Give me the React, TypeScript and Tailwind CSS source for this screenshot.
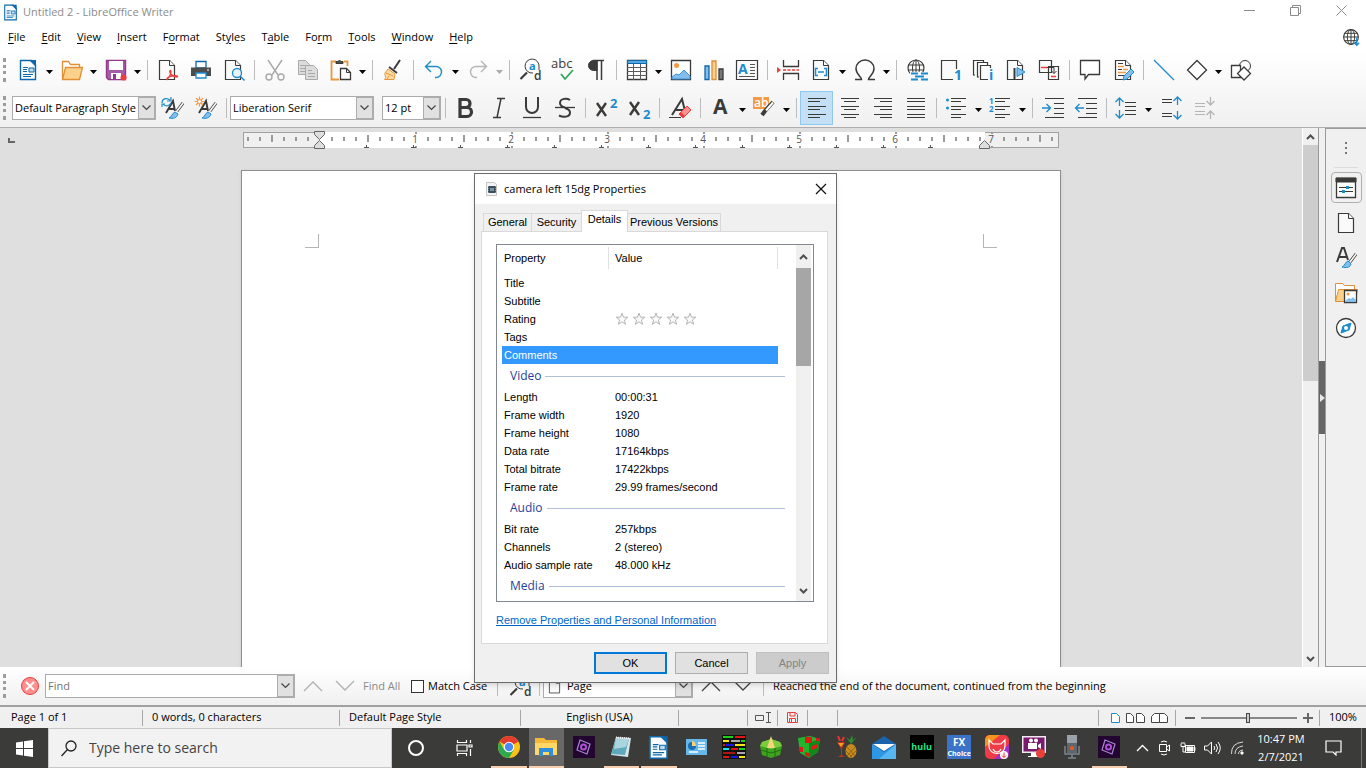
import { useState } from "react";
import type { ReactNode } from "react";
import { clsx } from "clsx";

const BLUE = "#1e8bcd";
const INK = "#3a3a38";
const RED = "#ed3d3b";

interface IconProps {
  children: ReactNode;
  size?: number;
  color?: string;
}

function Icon({ children, size = 22, color = INK }: IconProps) {
  return (
    <svg width={size} height={size} viewBox="0 0 22 22" fill="none" stroke={color} strokeWidth="1" className="shrink-0 overflow-visible" aria-hidden="true">
      {children}
    </svg>
  );
}

const WriterIcon = ({ size = 22 }: { size?: number }) => (
  <Icon size={size} color="#0d69ab">
    <path d="M3.5 1.5h11l4 4v15h-15z" fill="#fff" strokeWidth="1.4" />
    <path d="M12 1h7v7z" fill="#0d69ab" stroke="none" />
    <path d="M6 8.5h5M6 10.5h4M6 12.5h4M6 15.5h10M6 17.5h8" />
    <path d="M12 9h5v4h-5z" fill="#bcdcf3" />
  </Icon>
);

const Sheet = ({ x = 4, fill = "#fafafa", stroke = INK }: { x?: number; fill?: string; stroke?: string }) => (
  <g fill={fill} stroke={stroke}>
    <path d={`M${x - 0.5} 1.5h10l5 5v14h-15z`} strokeWidth="1.2" />
    <path d={`M${x + 9.5} 1.5v5h5`} />
  </g>
);

const icons: Record<string, ReactNode> = {
  new: <WriterIcon />,
  open: (
    <Icon color="#e18e35">
      <path d="M1.5 20V2.5h6l2 3h9v4" fill="#fff" strokeWidth="1.3" />
      <path d="M1.5 20.5l3-12h17l-3 12z" fill="#fcd28b" strokeWidth="1.3" />
    </Icon>
  ),
  save: (
    <Icon color="#93398d">
      <path d="M1.5 1.5h19v19h-17l-2-2z" fill="#a75aa5" strokeWidth="1.4" />
      <path d="M4 2h14v9H4z" fill="#fff" stroke="none" />
      <path d="M6 14h10v6H6z" fill="#fff" stroke="none" />
      <path d="M8 15h3v5H8z" fill="#93398d" stroke="none" />
      <circle cx="18.5" cy="18.5" r="3" fill={RED} stroke="none" />
    </Icon>
  ),
  pdf: (
    <Icon>
      <Sheet x={3} />
      <path d="M10 20.500c4-4 4.500-8 3.500-9-2 0 0 6 6.500 6.500 2-1-1-2-4-1-3.500 0-7 2.500-6 3.500z" stroke={RED} strokeWidth="1.300" fill="#fff" />
    </Icon>
  ),
  print: (
    <Icon>
      <path d="M6 2.500h10V9H6z" fill="#fff" stroke="#0d69ab" strokeWidth="1.300" />
      <path d="M1 8.500h20V17H1z" fill="#4d4d4d" stroke="none" />
      <path d="M6 14h10v5H6z" fill="#fff" stroke={BLUE} strokeWidth="1.300" />
      <path d="M17 11h2" stroke="#fff" />
    </Icon>
  ),
  preview: (
    <Icon>
      <Sheet x={3} />
      <circle cx="14" cy="14" r="4.500" stroke={BLUE} fill="#e8f3fb" strokeWidth="1.300" />
      <path d="M17.500 17.500l4 4" stroke={BLUE} strokeWidth="1.500" />
    </Icon>
  ),
  cut: (
    <Icon color="#a9a9a9">
      <path d="M4 1l10 15M18 1L8 16" strokeWidth="1.400" />
      <circle cx="5" cy="18" r="3" strokeWidth="1.400" />
      <circle cx="17" cy="18" r="3" strokeWidth="1.400" />
    </Icon>
  ),
  copy: (
    <Icon color="#a9a9a9">
      <path d="M1.500 1.500h7l4 4v10h-11z" fill="#dcdcdc" />
      <path d="M3 6.500h5M3 9.500h5M3 12.500h5" />
      <path d="M8.500 6.500h8l4 4v10h-12z" fill="#dcdcdc" />
      <path d="M11 11.500h4M11 14.500h7M11 17.500h7" />
    </Icon>
  ),
  paste: (
    <Icon>
      <path d="M9 20.500H1.500v-18H6M14 2.500h3.500V7" stroke="#e9973e" strokeWidth="1.800" />
      <path d="M6 4.500V2.500h2L9.500 1 11 2.500h2v2z" fill="#4d4d4d" />
      <path d="M10.500 9.500h6l4 4v7h-10z" fill="#fff" strokeWidth="1.300" />
      <path d="M16.500 9.500v4h4" />
    </Icon>
  ),
  brush: (
    <Icon>
      <path d="M18 1l-6 9" strokeWidth="2" />
      <path d="M7 8l8 6" strokeWidth="1.800" />
      <path d="M6 10l7 5-1 5.500H2.500C5 18 2 16 3 14z" fill="#fdd9a2" stroke="#e9973e" />
      <path d="M4 14l7 3M5 20l2-3" stroke="#e9973e" />
    </Icon>
  ),
  undo: (
    <Icon color={BLUE}>
      <path d="M8 2L2.500 7.500 8 13M3 7.500h10a5.500 5.500 0 0 1 0 11h-1" strokeWidth="1.400" />
    </Icon>
  ),
  redo: (
    <Icon color="#b5b5b5">
      <path d="M14 2l5.500 5.500L14 13M19 7.500H9a5.500 5.500 0 0 0 0 11h1" strokeWidth="1.400" />
    </Icon>
  ),
  find: (
    <Icon>
      <path d="M14 14A7 7 0 1 1 20 8v3" />
      <path d="M8 13.500l-6.500 6.500" strokeWidth="2.200" />
      <text x="10" y="11" fontSize="11" fontWeight="700" fontFamily="Open Sans, sans-serif" fill={BLUE} stroke="none">a</text>
      <text x="15" y="21" fontSize="12" fontWeight="600" fontFamily="Open Sans, sans-serif" fill={INK} stroke="none">d</text>
    </Icon>
  ),
  spell: (
    <Icon>
      <text x="-1" y="9" fontSize="13" fontFamily="Open Sans, sans-serif" fill={INK} stroke="none">abc</text>
      <path d="M9 15l4 5 8-9" stroke="#2aa757" strokeWidth="1.700" />
    </Icon>
  ),
  pilcrow: (
    <Icon>
      <path d="M8 1.500h11" strokeWidth="1.500" />
      <path d="M12 1.500H8.500a5 5 0 0 0 0 10H12z" fill={INK} />
      <path d="M12 1v20M16.500 1v20" strokeWidth="1.500" />
    </Icon>
  ),
  table: (
    <Icon>
      <path d="M1.500 1.500h19v19h-19z" fill="#fff" strokeWidth="1.300" />
      <path d="M1.500 1.500h19v3h-19z" fill="#5aa7e0" stroke="#0d69ab" />
      <path d="M1 8.500h20M1 12.500h20M1 16.500h20M7.500 5v16M14.500 5v16" stroke="#5c5c5c" />
    </Icon>
  ),
  image: (
    <Icon>
      <path d="M1.500 1.500h19v19h-19z" fill="#fff" strokeWidth="1.300" />
      <circle cx="6.500" cy="6.500" r="2.500" fill="#f29a45" stroke="none" />
      <path d="M2 18l4-3 3 1 5-5 6 6v3H2z" fill="#83beec" stroke="#3a93d6" />
    </Icon>
  ),
  chart: (
    <Icon>
      <path d="M2 7h4v13.500H2z" fill="#83beec" stroke="#0d69ab" strokeWidth="1.300" />
      <path d="M9 2h4v18.500H9z" fill="#fcd28b" stroke="#e18e35" strokeWidth="1.300" />
      <path d="M16 10h4v10.500h-4z" fill="#797979" strokeWidth="1.300" />
    </Icon>
  ),
  textbox: (
    <Icon>
      <path d="M.500 1.500h21v19H.500z" fill="#fafafa" strokeWidth="1.200" />
      <text x="2" y="15" fontSize="14" fontWeight="700" fontFamily="Open Sans, sans-serif" fill={BLUE} stroke="none">A</text>
      <path d="M14 5.500h5M14 8.500h5M14 11.500h5M14 14.500h5M3 17.500h16" stroke="#555" />
    </Icon>
  ),
  pagebreak: (
    <Icon>
      <path d="M6.500 1v6.500h15V1M6.500 21v-6.500h15V21" strokeWidth="1.300" />
      <path d="M6 11h16" stroke={RED} strokeDasharray="3 1.500" strokeWidth="1.300" />
      <path d="M0 8l4 3-4 3z" fill={RED} stroke="none" />
    </Icon>
  ),
  field: (
    <Icon>
      <Sheet x={4} />
      <path d="M8 9.500H5.500v7H8M14 9.500h2.500v7H14M8 13h6" stroke={BLUE} strokeWidth="1.500" />
    </Icon>
  ),
  omega: (
    <Icon>
      <path d="M1 20.500h6.500c0-3-5.500-5-5.500-11a9 8.500 0 0 1 18 0c0 6-5.500 8-5.500 11H21" strokeWidth="1.500" />
    </Icon>
  ),
  link: (
    <Icon>
      <circle cx="10" cy="9" r="8" strokeWidth="1.200" />
      <ellipse cx="10" cy="9" rx="3.500" ry="8" />
      <path d="M2 6h16M2 11h16M10 1v16" />
      <path d="M4 13h18v9H4z" fill="#f8f8f8" stroke="none" />
      <path d="M12 14.500H5M12 20.500H5M15 14.500h7M15 20.500h7M9 17.500h9" stroke={BLUE} strokeWidth="2" />
    </Icon>
  ),
  footnote: (
    <Icon>
      <path d="M14 20.500H2.500v-19h15V10" fill="#fafafa" strokeWidth="1.200" />
      <text x="15" y="21" fontSize="14" fontWeight="700" fontFamily="Open Sans, sans-serif" fill={BLUE} stroke="none">1</text>
    </Icon>
  ),
  endnote: (
    <Icon>
      <path d="M3 16H1.500V1.500h10V4M7 18H5.500V3.500h10V6" strokeWidth="1.200" />
      <path d="M16 20.500H8.500V6.500h10V9" fill="#fafafa" strokeWidth="1.200" />
      <text x="17" y="21" fontSize="14" fontWeight="700" fontFamily="Open Sans, sans-serif" fill={BLUE} stroke="none">i</text>
    </Icon>
  ),
  bookmark: (
    <Icon>
      <Sheet x={3} />
      <path d="M9.500 9v12" strokeWidth="2" />
      <path d="M12 8.500l8 4.500-8 4.500z" fill="#83beec" stroke={BLUE} />
    </Icon>
  ),
  crossref: (
    <Icon>
      <path d="M1.500 1.500h12v12h-12zM10.500 7.500h10v13h-10z" fill="#fafafa" strokeWidth="1.200" />
      <path d="M3 8.500h6M13 17.500h5" stroke={RED} strokeWidth="1.500" />
      <path d="M9 8.500h7v6M13.500 12l2.500 2.500 2.500-2.500" />
    </Icon>
  ),
  comment: (
    <Icon>
      <path d="M1.500 1.500h19v14h-11L6 20v-4.500H1.500z" fill="#fff" strokeWidth="1.300" />
    </Icon>
  ),
  track: (
    <Icon>
      <Sheet x={4} />
      <path d="M6 4.500h5M6 10.500h4M6 16.500h6" />
      <path d="M6 7.500h6M11 10.500h5M6 13.500h8" stroke="#f29a45" strokeWidth="1.300" />
      <path d="M19 10l3 3-7 7-4 1 1-4z" fill="#83beec" stroke={BLUE} />
    </Icon>
  ),
  line: (
    <Icon color={BLUE}>
      <path d="M1 1l20 20" strokeWidth="1.300" />
    </Icon>
  ),
  diamond: (
    <Icon>
      <path d="M11 1.500l9.500 9.500-9.500 9.500L1.500 11z" fill="#fff" strokeWidth="1.300" />
    </Icon>
  ),
  shapes: (
    <Icon>
      <circle cx="15" cy="7" r="5.500" fill="#fff" />
      <path d="M1.500 6.500h9v12h-9z" fill="#fff" strokeWidth="1.300" />
      <path d="M14 8l6.500 6.500L14 21l-6.500-6.500z" fill="#fff" strokeWidth="1.300" />
    </Icon>
  ),
  updateStyle: (
    <Icon>
      <path d="M4 16l7-12 2 10M7 12h6" strokeWidth="1.900" />
      <path d="M0 6c0-4 4-6 8-3M9 0v4H5M9 6c-1 3-6 4-8 1M0 10V7h3" stroke={BLUE} strokeWidth="1.200" />
      <path d="M21 6l-6 8" strokeWidth="3" />
      <path d="M21 6l-6 8" stroke="#fff" strokeWidth="1.500" />
      <path d="M13 15l3 2c-1 4-5 5-9 4 3-1 3-5 6-6z" fill="#83beec" stroke={BLUE} />
    </Icon>
  ),
  newStyle: (
    <Icon>
      <path d="M4 16l7-12 2 10M7 12h6" strokeWidth="1.900" />
      <path d="M4.500-.500v10M-.500 4.500h10M1 1l7 7M8 1L1 8" stroke="#f29a45" strokeWidth="1.200" />
      <circle cx="4.500" cy="4.500" r="2" fill="#fff" stroke="#f29a45" />
      <path d="M21 6l-6 8" strokeWidth="3" />
      <path d="M21 6l-6 8" stroke="#fff" strokeWidth="1.500" />
      <path d="M13 15l3 2c-1 4-5 5-9 4 3-1 3-5 6-6z" fill="#83beec" stroke={BLUE} />
    </Icon>
  ),
  bold: (
    <Icon>
      <path d="M5 2.500h6a4 4 0 0 1 0 8H5zM5 10.500h7a4.500 4.500 0 0 1 0 9H5z" strokeWidth="3.200" />
    </Icon>
  ),
  italic: (
    <Icon>
      <path d="M9 1.500h8M5 20.500h8M13 1.500L9 20.500" strokeWidth="1.500" />
    </Icon>
  ),
  underline: (
    <Icon>
      <path d="M5 0v10a6 6 0 0 0 12 0V0" strokeWidth="2" />
      <path d="M2 20.500h18" strokeWidth="1.300" />
    </Icon>
  ),
  strike: (
    <Icon>
      <path d="M16 3c-3-2-10-2-10 3 0 3 3 4 5 4.500M11 11c3 1 5 2 5 4.500 0 5-7 5-11 3" strokeWidth="2" />
      <path d="M1 10.500h20" strokeWidth="1.300" />
    </Icon>
  ),
  sup: (
    <Icon>
      <path d="M2 6l9 13M11 6L2 19" strokeWidth="2.400" />
      <text x="15" y="11" fontSize="13" fontWeight="700" fontFamily="Open Sans, sans-serif" fill={BLUE} stroke="none">2</text>
    </Icon>
  ),
  sub: (
    <Icon>
      <path d="M2 5l9 13M11 5L2 18" strokeWidth="2.400" />
      <text x="15" y="22" fontSize="13" fontWeight="700" fontFamily="Open Sans, sans-serif" fill={BLUE} stroke="none">2</text>
    </Icon>
  ),
  clear: (
    <Icon>
      <path d="M3 18L13 2l3 12M7 13h9" strokeWidth="2" />
      <path d="M0 20.500h12" />
      <path d="M18 9l4 4-8 8-4-4z" fill="#ff8f8f" stroke={RED} />
      <path d="M12 15l4 4-2 2-4-4z" fill={RED} stroke="none" />
    </Icon>
  ),
  fontColor: (
    <Icon>
      <text x="3" y="17" fontSize="21" fontWeight="700" fontFamily="Open Sans, sans-serif" fill={INK} stroke="none">A</text>
    </Icon>
  ),
  highlight: (
    <Icon>
      <path d="M-1 0h16v12H-1z" fill="#f29a45" stroke="none" />
      <text x="0" y="10" fontSize="12" fontWeight="600" fontFamily="Open Sans, sans-serif" fill="#fff" stroke="none">ab</text>
      <path d="M19 5l-8 9-3 4" strokeWidth="4" />
      <path d="M19 5.500l-7 8" stroke="#fff" strokeWidth="2" />
    </Icon>
  ),
  left: (
    <Icon>
      <path d="M2 1.500h18M2 4.500h12M2 9.500h18M2 12.500h12M2 17.500h18M2 20.500h12" strokeWidth="1.200" />
    </Icon>
  ),
  center: (
    <Icon>
      <path d="M2 1.500h18M5 4.500h12M2 9.500h18M5 12.500h12M2 17.500h18M5 20.500h12" strokeWidth="1.200" />
    </Icon>
  ),
  right: (
    <Icon>
      <path d="M2 1.500h18M8 4.500h12M2 9.500h18M8 12.500h12M2 17.500h18M8 20.500h12" strokeWidth="1.200" />
    </Icon>
  ),
  justify: (
    <Icon>
      <path d="M2 1.500h18M2 4.500h18M2 9.500h18M2 12.500h18M2 17.500h18M2 20.500h18" strokeWidth="1.200" />
    </Icon>
  ),
  bullets: (
    <Icon>
      <path d="M5 1.500h15M5 4.500h10M5 9.500h15M5 12.500h10M5 17.500h15M5 20.500h10" strokeWidth="1.200" />
      <circle cx="1.500" cy="3" r="1.500" fill={BLUE} stroke="none" />
      <circle cx="1.500" cy="11" r="1.500" fill={BLUE} stroke="none" />
    </Icon>
  ),
  numbers: (
    <Icon>
      <path d="M5 1.500h15M5 4.500h10M5 9.500h15M5 12.500h10M5 17.500h15M5 20.500h10" strokeWidth="1.200" />
      <g fontSize="8" fontWeight="700" fontFamily="Open Sans, sans-serif" fill={BLUE} stroke="none">
        <text x="-1" y="7">1</text>
        <text x="-1" y="15">2</text>
      </g>
    </Icon>
  ),
  indent: (
    <Icon>
      <path d="M3 1.500h19M12 6.500h10M12 11.500h10M12 16.500h10M3 20.500h19" strokeWidth="1.200" />
      <path d="M0 11h8M4.500 7l4 4-4 4" stroke={BLUE} strokeWidth="1.300" />
    </Icon>
  ),
  outdent: (
    <Icon>
      <path d="M3 1.500h19M11 6.500h11M11 11.500h11M11 16.500h11M3 20.500h19" strokeWidth="1.200" />
      <path d="M9 11H1M4.500 7l-4 4 4 4" stroke={BLUE} strokeWidth="1.300" />
    </Icon>
  ),
  lineSpacing: (
    <Icon>
      <path d="M9 5.500h11M9 9.500h11M9 13.500h11M9 17.500h11" strokeWidth="1.200" />
      <path d="M3.500 1v8M-.500 5l4-4 4 4M3.500 13v8M-.500 17l4 4 4-4" stroke={BLUE} strokeWidth="1.300" />
    </Icon>
  ),
  spaceUp: (
    <Icon>
      <path d="M2 2.500h10M2 5.500h10M2 16.500h10M2 19.500h10" strokeWidth="1.200" />
      <path d="M17.500 0v8M13.500 4l4-4 4 4M17.500 14v8M13.500 18l4 4 4-4" stroke={BLUE} strokeWidth="1.300" />
    </Icon>
  ),
  spaceDown: (
    <Icon color="#b5b5b5">
      <path d="M2 6.500h10M2 9.500h10M2 14.500h10M2 17.500h10" strokeWidth="1.200" />
      <path d="M17.500 0v8M13.500 4l4 4 4-4M17.500 14v8M13.500 18l4-4 4 4" strokeWidth="1.300" />
    </Icon>
  ),
};

// "|" is a separator, "v" and "x" are drop-down arrows (normal and greyed out)
const standardBar = [
  "new", "v", "open", "v", "save", "v", "|", "pdf", "print", "preview", "|", "cut", "copy", "paste", "v", "|",
  "brush", "|", "undo", "v", "redo", "x", "|", "find", "spell", "pilcrow", "|", "table", "v", "image", "chart",
  "textbox", "|", "pagebreak", "field", "v", "omega", "v", "|", "link", "footnote", "endnote", "bookmark",
  "crossref", "|", "comment", "track", "|", "line", "diamond", "v", "shapes",
];

const formatBar = [
  "|", "bold", "italic", "underline", "strike", "|", "sup", "sub", "|", "clear", "|", "fontColor", "v", "highlight",
  "v", "|", "left", "center", "right", "justify", "|", "bullets", "v", "numbers", "v", "|", "indent", "outdent", "|",
  "lineSpacing", "v", "spaceUp", "spaceDown",
];

const Separator = () => (
  <div className="flex w-2 shrink-0 justify-center">
    <div className="h-5 w-px bg-[#bdbdbd]" />
  </div>
);

const Grip = () => <div className="h-6 w-[3px] shrink-0 border-l-[3px] border-dotted border-[#9c9c9c]" />;

function ToolItems({ items }: { items: string[] }) {
  return (
    <>
      {items.map((item, i) => {
        if (item === "|") return <Separator key={i} />;
        if (item === "v" || item === "x") {
          return (
            <button key={i} aria-label="More options" className="flex h-8 w-[11px] shrink-0 items-center justify-center pt-1">
              <svg width="7" height="4" viewBox="0 0 7 4" className={item === "v" ? "fill-black" : "fill-[#aaa]"}>
                <path d="M0 0h7L3.500 4z" />
              </svg>
            </button>
          );
        }
        return (
          <button
            key={i}
            aria-label={item}
            className={clsx(
              "flex h-[34px] w-[33px] shrink-0 items-center justify-center",
              item === "left" && "border border-[#90c8f0] bg-[#c5e0f5]"
            )}
          >
            {icons[item]}
          </button>
        );
      })}
    </>
  );
}

const ChevronDown = () => (
  <svg width="9" height="6" viewBox="0 0 9 6" fill="none" stroke="#444" strokeWidth="1.200">
    <path d="M.500.500l4 4 4-4" />
  </svg>
);

function Combo({ label, value, className, icon }: { label: string; value: string; className: string; icon?: ReactNode }) {
  return (
    <div className={clsx("relative flex h-6 shrink-0 items-center border border-[#acacac] bg-white", className)}>
      {icon}
      <select aria-label={label} className="h-full min-w-0 flex-1 appearance-none overflow-hidden bg-transparent pl-0.5 outline-none">
        <option>{value}</option>
      </select>
      <span className="pointer-events-none flex h-full w-[17px] shrink-0 items-center justify-center border border-[#acacac] bg-[#e1e1e1]">
        <ChevronDown />
      </span>
    </div>
  );
}

const menus: [string, string, string][] = [
  ["", "F", "ile"], ["", "E", "dit"], ["", "V", "iew"], ["", "I", "nsert"], ["F", "o", "rmat"], ["St", "y", "les"],
  ["T", "a", "ble"], ["Fo", "r", "m"], ["", "T", "ools"], ["", "W", "indow"], ["", "H", "elp"],
];

function TitleBar() {
  return (
    <header className="flex h-6 items-center bg-white pl-0.5">
      <WriterIcon size={17} />
      <h1 className="flex-1 pl-1 text-[#8c8c8c]">Untitled 2 - LibreOffice Writer</h1>
      <div className="flex pr-0.5 pb-1">
        <button aria-label="Minimize" className="flex w-[46px] items-center justify-center">
          <svg width="11" height="11" fill="none" stroke="#8c8c8c"><path d="M0 5.500h11" /></svg>
        </button>
        <button aria-label="Restore" className="flex w-[46px] items-center justify-center">
          <svg width="11" height="11" fill="none" stroke="#8c8c8c"><path d="M.500 2.500h8v8h-8zM2.500 2.500v-2h8v8h-2" /></svg>
        </button>
        <button aria-label="Close" className="flex w-[46px] items-center justify-center">
          <svg width="11" height="11" fill="none" stroke="#8c8c8c"><path d="M.500.500l10 10M10.500.500l-10 10" /></svg>
        </button>
      </div>
    </header>
  );
}

function MenuBar() {
  return (
    <nav className="flex h-[26px] items-center bg-white pl-2">
      {menus.map(([pre, key, post]) => (
        <button key={pre + key + post} className="pr-4">
          {pre}<span className="underline underline-offset-2">{key}</span>{post}
        </button>
      ))}
      <button aria-label="Check for updates" className="mr-1.5 ml-auto">
        <Icon size={18}>
          <circle cx="11" cy="11" r="9" strokeWidth="1.400" />
          <ellipse cx="11" cy="11" rx="4.500" ry="9" strokeWidth="1.200" />
          <path d="M11 2v18M2 11h18M3 6.500h16M3 15.500h16" strokeWidth="1.200" />
          <path d="M18 12v9M15 18l3 3 3-3" stroke={BLUE} strokeWidth="1.700" />
        </Icon>
      </button>
    </nav>
  );
}

function Ruler() {
  const ticks = [];
  for (let i = -6; i <= 61; i++) {
    if (i % 8 !== 0 || i < 0) ticks.push(i);
  }
  return (
    <svg width="818" height="20" className="mx-auto shrink-0">
      <rect x="1.500" y="2.500" width="815" height="15" fill="#f0f0f0" stroke="#a0a0a0" />
      <rect x="78" y="2" width="665" height="16" fill="#fff" />
      {ticks.map((i) => (
        <rect
          key={i}
          x={77 + i * 12}
          y={i % 4 === 0 ? 5 : 7}
          width="2"
          height={i % 4 === 0 ? 7 : 4}
          fill="#9a9a9a"
        />
      ))}
      {[1, 2, 3, 4, 5, 6, 7].map((n) => (
        <g key={n}>
          <rect x={77 + n * 96} y="2" width="2" height="2" fill="#9a9a9a" />
          <rect x={77 + n * 96} y="16" width="2" height="2" fill="#9a9a9a" />
          <text x={77 + n * 96} y="13" fontSize="10" textAnchor="middle" fill="#555">{n}</text>
        </g>
      ))}
      {Array.from({ length: 13 }, (_, i) => (
        <path key={i} d={`M${122 + i * 47} 17.500h5M${124.5 + i * 47} 15v2`} stroke="#555" />
      ))}
      <path d="M72.500 1.500h10v3l-5 5-5-5zM72.500 18.500h10v-3l-5-5-5 5zM737.500 18.500h10v-3l-5-5-5 5z" fill="#dedede" stroke="#666" />
    </svg>
  );
}

function DocumentArea() {
  return (
    <main className="flex min-w-0 flex-1 flex-col overflow-hidden bg-[#dfdfdf]">
      <div className="flex h-[42px] items-start pt-0.5">
        <span className="mt-2 ml-2 h-[5px] w-[7px] shrink-0 border-b-2 border-l-2 border-[#666]" />
        <div className="-ml-[15px] flex flex-1">
          <Ruler />
        </div>
      </div>
      <article className="mx-auto flex w-[820px] flex-1 items-start justify-between border border-b-0 border-[#8f8f8f] bg-white px-[63px] pt-[63px] shadow-sm">
        <span className="size-[14px] border-r border-b border-[#b5b5b5]" />
        <span className="size-[14px] border-b border-l border-[#b5b5b5]" />
      </article>
    </main>
  );
}

const Arrow = ({ up }: { up?: boolean }) => (
  <svg width="9" height="6" viewBox="0 0 9 6" fill="none" stroke="#505050" strokeWidth="2">
    <path d={up ? "M1 5l3.500-3.500L8 5" : "M1 1l3.500 3.500L8 1"} />
  </svg>
);

function Sidebar() {
  return (
    <aside className="flex shrink-0 bg-[#f0f0f0]">
      <div className="flex w-4 flex-col items-center border-l border-white">
        <span className="flex h-[17px] items-center"><Arrow up /></span>
        <span className="h-[236px] w-full bg-[#cdcdcd]" />
        <span className="mt-auto flex h-[17px] items-center"><Arrow /></span>
      </div>
      <div className="w-2 border-x border-[#9a9a9a] bg-[#f0f0f0] pt-[233px]">
        <button aria-label="Hide sidebar" className="flex h-[73px] w-full items-center justify-center bg-[#666]">
          <svg width="5" height="8" className="fill-[#e8e8e8]"><path d="M0 0l5 4-5 4z" /></svg>
        </button>
      </div>
      <div className="flex w-10 flex-col items-center gap-1 border-t border-b border-[#9a9a9a]">
        <button aria-label="Sidebar settings" className="flex h-[39px] w-6 flex-col items-center justify-center gap-[3px] border-b border-[#dcdcdc]">
          <i className="size-0.5 bg-[#777]" /><i className="size-0.5 bg-[#777]" /><i className="size-0.5 bg-[#777]" />
        </button>
        <button aria-label="Properties" className="flex size-[31px] items-center justify-center rounded-sm border border-[#b0b0b0]">
          <Icon>
            <path d="M1.500 1.500h19v19h-19z" fill="#fff" strokeWidth="1.300" />
            <path d="M1 1h20v4H1z" fill={INK} />
            <path d="M4 10.500h14M4 14.500h14" />
            <path d="M11 9h3v3h-3zM7 13h3v3H7z" fill={BLUE} stroke="none" />
          </Icon>
        </button>
        <button aria-label="Page" className="flex size-[31px] items-center justify-center"><Icon><Sheet x={4} /></Icon></button>
        <button aria-label="Styles" className="flex size-[31px] items-center justify-center">
          <Icon>
            <path d="M2 15L7 1h2l4 12M4 10h8" strokeWidth="2" />
            <path d="M21 7l-6 8" strokeWidth="3" />
            <path d="M21 7l-6 8" stroke="#fff" strokeWidth="1.500" />
            <path d="M13 14l3 3c-1 4-5 4-9 3 3-1 3-5 6-6z" fill="#83beec" stroke={BLUE} />
          </Icon>
        </button>
        <button aria-label="Gallery" className="flex size-[31px] items-center justify-center">
          <Icon>
            <path d="M.500 19V1.500h7l2 2h10V8" stroke="#e18e35" fill="#fff" />
            <path d="M.500 19.500l3-12h19l-2 12z" stroke="#e18e35" fill="#fcd28b" />
            <path d="M9.500 8.500h12v12h-12z" fill="#fff" strokeWidth="1.300" />
            <circle cx="13" cy="12" r="1.500" fill="#f29a45" stroke="none" />
            <path d="M10 19l4-3 2 1 2-2 3 3v2H10z" fill="#83beec" stroke="none" />
          </Icon>
        </button>
        <button aria-label="Navigator" className="flex size-[31px] items-center justify-center">
          <Icon>
            <circle cx="11" cy="11" r="9.500" fill="#fff" strokeWidth="1.300" />
            <path d="M16 6l-2 7-8 3 2-7z" fill={BLUE} stroke={BLUE} />
            <circle cx="11" cy="11" r="2" fill="#fff" stroke="none" />
          </Icon>
        </button>
      </div>
    </aside>
  );
}

const Chevron = ({ up, faint }: { up?: boolean; faint?: boolean }) => (
  <svg width="20" height="12" fill="none" stroke={faint ? "#b0b0b0" : "#444"} strokeWidth="1.300">
    <path d={up ? "M1 11l9-9 9 9" : "M1 1l9 9 9-9"} />
  </svg>
);

function FindBar() {
  return (
    <section className="flex h-10 shrink-0 items-center border-b-2 border-[#a0a0a0] bg-linear-to-b from-white to-[#f0f0f0] pl-[3px]">
      <Grip />
      <button aria-label="Close find bar" className="ml-2 flex w-[31px] justify-center">
        <svg width="20" height="20" viewBox="0 0 20 20">
          <circle cx="10" cy="10" r="8.500" fill="#ff8f8f" stroke={RED} />
          <path d="M6 6l8 8M14 6l-8 8" stroke="#fff" strokeWidth="2" />
        </svg>
      </button>
      <div className="flex h-6 w-[250px] shrink-0 border border-[#acacac] bg-white">
        <input aria-label="Find" placeholder="Find" className="min-w-0 flex-1 pl-0.5 outline-none placeholder:text-[#757575]" />
        <button aria-label="Search history" className="flex w-[17px] items-center justify-center border border-[#acacac] bg-[#e1e1e1]">
          <ChevronDown />
        </button>
      </div>
      <button aria-label="Find previous" className="ml-2"><Chevron up faint /></button>
      <button aria-label="Find next" className="ml-3"><Chevron faint /></button>
      <button className="ml-2 w-12 text-left whitespace-nowrap text-[#8a8a8a]">Find All</button>
      <label className="flex w-[82px] items-center gap-1 whitespace-nowrap">
        <input type="checkbox" className="size-[13px] shrink-0 appearance-none border border-[#333] bg-white" />
        Match Case
      </label>
      <Separator />
      <button aria-label="Find and replace" className="mr-1 ml-2">{icons.find}</button>
      <Separator />
      <Combo
        label="Navigate by"
        value="Page"
        className="w-[150px]"
        icon={<span className="px-[3px]"><Icon size={15}><Sheet x={4} /></Icon></span>}
      />
      <button aria-label="Previous page" className="ml-2"><Chevron up /></button>
      <button aria-label="Next page" className="mr-1.5 ml-3"><Chevron /></button>
      <Separator />
      <p className="pl-1.5">Reached the end of the document, continued from the beginning</p>
    </section>
  );
}

function StatusBar() {
  const cell = "flex h-4 items-center border-r border-[#a8a8a8]";
  return (
    <footer className="flex h-[21px] shrink-0 items-center bg-[#f0f0f0]">
      <span className={clsx(cell, "w-[143px] pl-[11px]")}>Page 1 of 1</span>
      <span className={clsx(cell, "w-[197px] pl-[9px]")}>0 words, 0 characters</span>
      <span className={clsx(cell, "w-[181px] pl-[9px]")}>Default Page Style</span>
      <span className={clsx(cell, "w-[158px] justify-center")}>English (USA)</span>
      <span className={clsx(cell, "w-[69px]")} />
      <span className={clsx(cell, "w-[30px] justify-center")}>
        <svg width="16" height="11" fill="none" stroke="#555"><path d="M.500 3.500h8v5h-8zM11 .500h5M11 10.500h5M13.500.500v10" /></svg>
      </span>
      <span className={clsx(cell, "w-[30px] justify-center")}>
        <svg width="11" height="11" fill="none" stroke={RED}><path d="M.500.500h8l2 2v8H.500zM3 .500v3.500h5V.500M2.500 10.500v-4h6v4M4.500 7v3" /></svg>
      </span>
      <span className={clsx(cell, "w-[30px]")} />
      <span className={clsx(cell, "flex-1")} />
      <span className={clsx(cell, "w-[77px] justify-center gap-1.5 pl-1")}>
        <svg width="9" height="10" fill="#fff" stroke={BLUE}><path d="M.500.500h5l3 3v6h-8z" /></svg>
        <svg width="19" height="10" fill="#fff" stroke="#444"><path d="M.500.500h4l3 3v6h-7zM10.500.500h5l3 3v6h-8z" /></svg>
        <svg width="17" height="10" fill="#fff" stroke="#444"><path d="M8.500.500h-5l-3 3v6h8zM8.500.500h5l3 3v6h-8z" /></svg>
      </span>
      <div className={clsx(cell, "w-36 justify-between pr-1.5 pl-[9px]")}>
        <button aria-label="Zoom out" className="h-0.5 w-2.5 bg-[#666]" />
        <input
          type="range"
          aria-label="Zoom"
          min={0}
          max={100}
          defaultValue={49}
          className="h-0.5 w-24 appearance-none bg-[#888] [&::-webkit-slider-thumb]:h-2.5 [&::-webkit-slider-thumb]:w-1 [&::-webkit-slider-thumb]:appearance-none [&::-webkit-slider-thumb]:border [&::-webkit-slider-thumb]:border-[#444] [&::-webkit-slider-thumb]:bg-[#ccc]"
        />
        <button aria-label="Zoom in">
          <svg width="10" height="10" stroke="#666" strokeWidth="2"><path d="M0 5h10M5 0v10" /></svg>
        </button>
      </div>
      <span className="w-[46px] pl-[9px]">100%</span>
    </footer>
  );
}

interface PropertyRow {
  name: string;
  value?: string;
  group?: boolean;
}

const properties: PropertyRow[] = [
  { name: "Title" },
  { name: "Subtitle" },
  { name: "Rating" },
  { name: "Tags" },
  { name: "Comments" },
  { name: "Video", group: true },
  { name: "Length", value: "00:00:31" },
  { name: "Frame width", value: "1920" },
  { name: "Frame height", value: "1080" },
  { name: "Data rate", value: "17164kbps" },
  { name: "Total bitrate", value: "17422kbps" },
  { name: "Frame rate", value: "29.99 frames/second" },
  { name: "Audio", group: true },
  { name: "Bit rate", value: "257kbps" },
  { name: "Channels", value: "2 (stereo)" },
  { name: "Audio sample rate", value: "48.000 kHz" },
  { name: "Media", group: true },
];

function Stars() {
  return (
    <div className="flex gap-[3px]">
      {[1, 2, 3, 4, 5].map((n) => (
        <svg key={n} width="14" height="14" viewBox="0 0 14 14" fill="#fafafa" stroke="#b4b4b4">
          <path d="M7 1.200l1.500 4h4.300L9.400 8l1.200 4.300L7 9.800l-3.600 2.500L4.600 8 1.200 5.200h4.300z" />
        </svg>
      ))}
    </div>
  );
}

function PropertiesDialog() {
  const [selected, setSelected] = useState("Comments");
  const tab = "border border-[#d9d9d9] h-[19px] bg-[#f0f0f0] text-center whitespace-nowrap";
  const button = "h-[22px] w-[73px] border";

  return (
    <div
      role="dialog"
      aria-label="camera left 15dg Properties"
      className="absolute top-[173px] left-[474px] flex w-[363px] flex-col border border-[#6b6b6b] bg-[#f0f0f0] font-['Liberation_Sans',sans-serif] text-[11px] shadow-md"
    >
      <div className="flex h-[30px] items-center bg-white pr-[9px] pl-[11px] font-['Open_Sans',sans-serif]">
        <svg width="11" height="14" viewBox="0 0 11 14">
          <path d="M.500.500h8l2 2v11H.500z" fill="#f4f4f4" stroke="#c4c4c4" />
          <path d="M2 4h8v7H2z" fill="#3d4b5c" />
          <path d="M4 6h4v3H4z" fill="#6f9a9c" />
          <path d="M2.500 4v7M9.500 4v7" stroke="#7d8a9b" strokeDasharray="1 1" />
        </svg>
        <h2 className="flex-1 pl-[7px]">camera left 15dg Properties</h2>
        <button aria-label="Close">
          <svg width="12" height="12" fill="none" stroke="#111" strokeWidth="1.200"><path d="M1 1l10 10M11 1L1 11" /></svg>
        </button>
      </div>

      <div role="tablist" className="mt-1.5 -mb-px flex items-end pl-2">
        <button role="tab" className={clsx(tab, "w-[49px]")}>General</button>
        <button role="tab" className={clsx(tab, "w-[49px] border-x-0")}>Security</button>
        <button role="tab" aria-selected className="relative h-[22px] w-[47px] border border-b-0 border-[#d9d9d9] bg-white pb-1 text-center">Details</button>
        <button role="tab" className={clsx(tab, "w-[93px] border-l-0")}>Previous Versions</button>
      </div>

      <div className="mr-2 ml-1.5 flex flex-col items-start border border-[#d9d9d9] bg-white px-[14px] pt-3 pb-[15px]">
        <div className="flex h-[358px] w-[318px] overflow-hidden border border-[#828790]">
          <div className="min-w-0 flex-1 overflow-hidden pt-0.5 pl-[5px]">
            <table className="w-[283px] table-fixed border-separate border-spacing-0 text-left">
              <colgroup>
                <col className="w-[107px]" />
                <col className="w-[169px]" />
                <col className="w-[7px]" />
              </colgroup>
              <thead>
                <tr className="h-[22px]">
                  <th className="border-r border-[#e0e0e0] p-0 pl-0.5 font-normal">Property</th>
                  <th className="border-r border-[#e0e0e0] p-0 pl-1.5 font-normal">Value</th>
                  <th className="p-0" />
                </tr>
              </thead>
              <tbody>
                <tr className="h-[5px]"><td className="p-0" colSpan={3} /></tr>
                {properties.map(({ name, value, group }) =>
                  group ? (
                    <tr key={name} className="h-6">
                      <td colSpan={3} className="p-0 pl-2">
                        <div className="flex items-center gap-1 font-['Open_Sans',sans-serif] text-xs text-[#1f3f9a]">
                          {name}
                          <span className="h-px flex-1 bg-[#b0bfdc]" />
                        </div>
                      </td>
                    </tr>
                  ) : (
                    <tr key={name} className="h-[18px]" onClick={() => setSelected(name)}>
                      <td className={clsx("p-0 pl-0.5", selected === name && "bg-[#3399ff] text-white")}>{name}</td>
                      <td className={clsx("p-0 pl-1.5", selected === name && "bg-[#3399ff] text-white")}>
                        {name === "Rating" ? <Stars /> : value}
                      </td>
                      <td className="p-0" />
                    </tr>
                  )
                )}
              </tbody>
            </table>
          </div>
          <div className="mr-0.5 flex w-[15px] shrink-0 flex-col items-center bg-[#f0f0f0]">
            <span className="flex h-[23px] items-center"><Arrow up /></span>
            <span className="h-[98px] w-full bg-[#a6a6a6]" />
            <span className="mt-auto flex h-5 items-center"><Arrow /></span>
          </div>
        </div>
        <a href="#remove" className="mt-2.5 leading-4 text-[#0066cc] underline">Remove Properties and Personal Information</a>
      </div>

      <div className="flex justify-end gap-2 pt-2 pr-[7px] pb-2">
        <button className={clsx(button, "border-2 border-[#0078d7] bg-[#e1e1e1]")}>OK</button>
        <button className={clsx(button, "border-[#adadad] bg-[#e1e1e1]")}>Cancel</button>
        <button disabled className={clsx(button, "border-[#bfbfbf] bg-[#cccccc] text-[#838383]")}>Apply</button>
      </div>
    </div>
  );
}

const Premiere = () => (
  <svg width="22" height="22" viewBox="0 0 22 22">
    <path d="M0 0h22v22H0z" fill="#220630" />
    <g fill="none" stroke="#a984d8">
      <path d="M7 4l10 4-3 10-10-4z" strokeWidth="1.200" />
      <circle cx="10.500" cy="11" r="2.500" stroke="#b04fd8" strokeWidth="2" />
    </g>
  </svg>
);

const apps: { name: string; state?: "open" | "active"; icon: ReactNode }[] = [
  {
    name: "Chrome",
    state: "open",
    icon: (
      <svg width="22" height="22" viewBox="0 0 22 22">
        <circle cx="11" cy="11" r="11" fill="#fbc116" />
        <path d="M11 11L1.500 5.500A11 11 0 0 1 20.500 5.500z" fill="#e33b2e" />
        <path d="M1.500 5.500A11 11 0 0 0 11 22l5-8.500H6z" fill="#2da94f" />
        <circle cx="11" cy="11" r="5.300" fill="#fff" />
        <circle cx="11" cy="11" r="4.200" fill="#4a8af4" />
      </svg>
    ),
  },
  {
    name: "File Explorer",
    state: "active",
    icon: (
      <svg width="24" height="22" viewBox="0 0 24 22">
        <path d="M1 2h9l2 2h11v15H1z" fill="#f5b93a" />
        <path d="M1 7h22v12H1z" fill="#ffd766" />
        <path d="M5 20v-8h14v8h-4v-4H9v4z" fill="#2f8fd8" />
      </svg>
    ),
  },
  { name: "Premiere Elements", icon: <Premiere /> },
  {
    name: "Notepad",
    state: "open",
    icon: (
      <svg width="22" height="22" viewBox="0 0 22 22">
        <path d="M6 1l15 1-3 19-17-2z" fill="#d9e6ea" />
        <path d="M6 2l13 1-4 16-14-1z" fill="#5fa9bd" />
        <path d="M6 2l13 1-3 8-12 2z" fill="#a9d5df" />
        <path d="M6 1.500l14 1" stroke="#eee" strokeWidth="2" strokeDasharray="1 1" />
      </svg>
    ),
  },
  { name: "LibreOffice Writer", state: "open", icon: <WriterIcon size={25} /> },
  {
    name: "Control Panel",
    icon: (
      <svg width="21" height="16" viewBox="0 0 21 16">
        <path d="M0 0h21v16H0z" fill="#67b8ea" />
        <circle cx="6" cy="7" r="4" fill="#1b6fb4" />
        <path d="M6 7V2a5 5 0 0 1 4 5z" fill="#ffd36b" />
        <path d="M12 4h7M12 7h7M12 10h7M3 13h9" stroke="#fff" strokeWidth="1.500" />
      </svg>
    ),
  },
  {
    name: "Bricks",
    icon: (
      <svg width="24" height="24" viewBox="0 0 24 24">
        <path d="M0 0h24v24H0z" fill="#111" />
        <path d="M1 1h10v2H1zM19 5h4v2h-4zM17 13h6v2h-6z" fill="#18d418" />
        <path d="M13 1h10v2H13zM1 9h2v2H1zM1 21h6v2H1zM9 13h7v2H9z" fill="#e01515" />
        <path d="M1 5h6v2H1zM13 9h10v2H13zM17 21h6v2h-6z" fill="#f4e714" />
        <path d="M9 5h9v2H9zM15 17h8v2h-8z" fill="#aaa" />
        <path d="M1 13h6v2H1z" fill="#19dff0" />
        <path d="M1 17h12v2H1z" fill="#b01515" />
        <path d="M4 9h8v2H4zM9 21h7v2H9z" fill="#1616e8" />
      </svg>
    ),
  },
  {
    name: "Green cube",
    icon: (
      <svg width="24" height="24" viewBox="0 0 24 24">
        <path d="M3 7l9-3 9 3 2 4-2 9-9 3-9-3-2-9z" fill="#3fa320" />
        <path d="M3 7l9-3 9 3 2 4-11 3L1 11z" fill="#7ccc3d" />
        <path d="M8 13v9M16 13v9M2 15l10 3 10-3" stroke="#1d7310" fill="none" />
        <path d="M12 1l4 12H8z" fill="#f3d77c" />
      </svg>
    ),
  },
  {
    name: "Puzzle cube",
    icon: (
      <svg width="24" height="24" viewBox="0 0 24 24">
        <path d="M1 3l12-2 10 3-2 13-9 6-9-5z" fill="#22b52c" />
        <path d="M12 8v15l9-6 2-13z" fill="#0f8a18" />
        <path d="M8 2h7v6H8zM2 12h4v5H3zM15 11l5-2v4l-5 2zM8 17l4 1v4l-4-2zM19 3h3v3h-3z" fill="#e01818" />
      </svg>
    ),
  },
  {
    name: "Tropical",
    icon: (
      <svg width="22" height="24" viewBox="0 0 22 24">
        <ellipse cx="15" cy="16" rx="5.500" ry="7" fill="#c98b1e" />
        <path d="M11 12l8 9M19 12l-8 9M10 16l6 6M20 16l-6 6" stroke="#8a5a12" strokeWidth=".8" />
        <path d="M15 9l-5-7 4 3 2-5 1 5 4-3z" fill="#2e8b2e" />
        <path d="M1 7h8l-3 7v6l3 2H2l3-2v-6z" fill="#b83222" />
        <path d="M2 8h6l-3 4z" fill="#f5a21b" />
        <path d="M2 1l2 5M8 2L6 6" stroke="#e33" strokeWidth="2" />
      </svg>
    ),
  },
  {
    name: "Mail",
    icon: (
      <svg width="24" height="23" viewBox="0 0 24 23">
        <path d="M0 8l12-8 12 8v14H0z" fill="#1b62ad" />
        <path d="M0 8l12 8 12-8v15H0z" fill="#2e96e3" />
        <path d="M24 8v15H7z" fill="#55b6f2" />
        <path d="M1 8h22L12 15z" fill="#fff" />
      </svg>
    ),
  },
  {
    name: "Hulu",
    icon: <span className="flex size-6 items-center justify-center bg-black text-[9px] font-bold text-[#1ce783]">hulu</span>,
  },
  {
    name: "FX Choice",
    icon: (
      <span className="flex size-6 flex-col items-center justify-center bg-[#3b73c8] font-bold text-white">
        <span className="text-[10px] leading-[13px]">FX</span>
        <span className="text-[7px] leading-[10px]">Choice</span>
      </span>
    ),
  },
  {
    name: "Video downloader",
    icon: (
      <svg width="24" height="24" viewBox="0 0 24 24">
        <rect width="24" height="24" rx="5" fill="#ee3b45" />
        <path d="M0 12V5a5 5 0 0 1 5-5h10z" fill="#f7941e" />
        <path d="M24 9v10a5 5 0 0 1-5 5H9z" fill="#a32fc4" />
        <path d="M4 5v6c0 10 16 10 16 0V5l-4 4H8zM8 14c2 4 6 4 8 0" fill="none" stroke="#fff" strokeWidth="1.200" />
        <circle cx="19" cy="20" r="4" fill="#fff" />
        <path d="M19 17.500v5M17 20.500l2 2 2-2" stroke="#e33" fill="none" />
      </svg>
    ),
  },
  {
    name: "Screen recorder",
    icon: (
      <svg width="24" height="24" viewBox="0 0 24 24">
        <path d="M0 1h24v17H0z" fill="#f0eaf0" />
        <path d="M1.500 2.500h21v14h-21z" fill="#7a1a6c" />
        <circle cx="9" cy="5.500" r="2" fill="#fff" />
        <circle cx="14" cy="5.500" r="2" fill="#fff" />
        <path d="M6 8h9v6H6zM16 10l3-2v6l-3-2zM9 18h6v3h3v1H6v-1h3z" fill="#fff" />
        <circle cx="18.500" cy="18.500" r="4.500" fill="#e8413a" />
      </svg>
    ),
  },
  {
    name: "Voice recorder",
    icon: (
      <svg width="16" height="24" viewBox="0 0 16 24">
        <path d="M3 0h10v8H3z" fill="#9aa1a8" />
        <path d="M3 8h10v10H3z" fill="#5f666e" />
        <circle cx="8" cy="13" r="2" fill="#ea5b1c" />
        <path d="M1 11v8h14v-8M8 19v4M4 23h8" fill="none" stroke="#7b8690" strokeWidth="1.500" />
      </svg>
    ),
  },
  { name: "Premiere Elements Editor", state: "open", icon: <Premiere /> },
];

function Taskbar() {
  return (
    <nav className="flex h-10 shrink-0 bg-[#3b3b3a] font-['Open_Sans',sans-serif] text-white">
      <button aria-label="Start" className="flex w-12 shrink-0 items-center justify-center">
        <svg width="17" height="17" viewBox="0 0 17 17" fill="#fff"><path d="M0 2.500l7-1v6.500H0zM8 1.300L17 0v8H8zM0 9h7v6.500l-7-1zM8 9h9v8l-9-1.300z" /></svg>
      </button>
      <label className="flex w-[344px] shrink-0 items-center gap-3 border border-[#c8c8c8] bg-[#f2f2f2] px-3 text-[#444]">
        <svg width="16" height="17" viewBox="0 0 16 17" fill="none" stroke="#222" strokeWidth="1.300"><circle cx="10" cy="6" r="5" /><path d="M6.500 9.500L.500 16" /></svg>
        <input aria-label="Search" placeholder="Type here to search" className="min-w-0 flex-1 bg-transparent text-sm outline-none placeholder:text-[#444]" />
      </label>
      <button aria-label="Cortana" className="flex w-[47px] shrink-0 items-center justify-center">
        <span className="size-4 rounded-full border-2 border-white" />
      </button>
      <button aria-label="Task View" className="flex w-[51px] shrink-0 items-center justify-center">
        <svg width="17" height="16" fill="none" stroke="#fff" strokeWidth="1.200"><path d="M1.500 0v2.500h9V0M1.500 16v-2.500h9V16M1 5h10v6H1zM14.500 0v3M14.500 9v7M13 5h3v2h-3z" /></svg>
      </button>
      <div className="flex min-w-0 flex-1">
        {apps.map(({ name, state, icon }) => (
          <button
            key={name}
            aria-label={name}
            className={clsx(
              "mx-px flex flex-1 items-center justify-center border-b-2",
              state ? "border-[#f7cfae]" : "border-transparent",
              state === "active" && "bg-[#686868]"
            )}
          >
            {icon}
          </button>
        ))}
      </div>
      <div className="flex w-[120px] shrink-0 items-center justify-between pr-1 pl-2">
        <svg width="13" height="8" fill="none" stroke="#fff" strokeWidth="1.300"><path d="M1 7l5.500-5.500L12 7" /></svg>
        <svg width="13" height="16" fill="none" stroke="#fff"><path d="M1.500 4.500h7v7h-7zM8.500 7l3-2v6l-3-2M3 2q3-2 6 0M3 14q3 2 6 0" /></svg>
        <svg width="16" height="12" fill="none" stroke="#fff"><path d="M5.500 3.500h9v7h-9zM15 5.500v3M1 1.500v3h4v-3M3 4v6h2M2 0v2M4 0v2" /><path d="M7 5h6v4H7z" fill="#fff" /></svg>
        <svg width="17" height="14" fill="none" stroke="#fff"><path d="M.500 5v4h3l4 4V1l-4 4zM10 5q1.500 2 0 4M12 3q3 4 0 8M14 1q4.500 6 0 12" /></svg>
        <svg width="14" height="14" fill="none" stroke="#fff"><path d="M1.500 13Q1 2 13 1M5 13Q5 6 13 5M8.500 13Q8.500 9.500 13 9" opacity=".8" /><circle cx="12" cy="12" r="1.200" fill="#fff" /></svg>
      </div>
      <div className="flex w-[66px] shrink-0 flex-col items-center justify-center text-[11px] leading-[18px] whitespace-nowrap">
        <span>10:47 PM</span>
        <span>2/7/2021</span>
      </div>
      <button aria-label="Notifications" className="flex w-[38px] shrink-0 items-center justify-center">
        <svg width="17" height="16" fill="none" stroke="#fff" strokeWidth="1.200"><path d="M1 1h15v11h-5v3l-3-3H1z" /></svg>
      </button>
      <div className="ml-[9px] w-[5px] shrink-0 border-l border-[#777]" />
    </nav>
  );
}

export default function App() {
  return (
    <div className="relative flex h-screen flex-col overflow-hidden bg-white font-['Open_Sans',sans-serif] text-[11px] text-black">
      <TitleBar />
      <MenuBar />
      <div className="border-b border-[#adadad] bg-linear-to-b from-white to-[#f0f0f0]">
        <div className="flex h-[39px] items-center pl-[3px]">
          <Grip />
          <div className="flex items-center pl-[5px]"><ToolItems items={standardBar} /></div>
        </div>
        <div className="flex h-[38px] items-center pl-[3px]">
          <Grip />
          <div className="flex items-center pl-1.5">
            <Combo label="Paragraph style" value="Default Paragraph Style" className="w-36" />
            <ToolItems items={["updateStyle", "newStyle", "|"]} />
            <Combo label="Font name" value="Liberation Serif" className="mr-2 w-36" />
            <Combo label="Font size" value="12 pt" className="w-[59px]" />
            <ToolItems items={formatBar} />
          </div>
        </div>
      </div>
      <div className="flex min-h-0 flex-1">
        <DocumentArea />
        <Sidebar />
      </div>
      <FindBar />
      <StatusBar />
      <Taskbar />
      <PropertiesDialog />
    </div>
  );
}
